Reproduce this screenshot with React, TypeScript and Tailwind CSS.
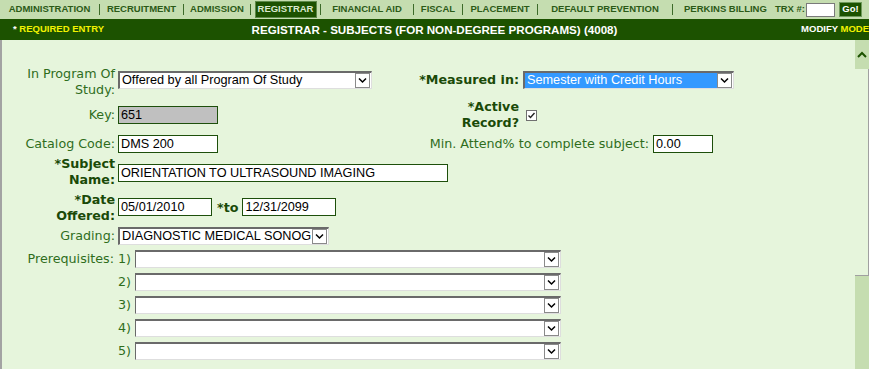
import React from "react";

const lbl = "font-['DejaVu_Sans',Verdana,sans-serif] text-[12.7px] leading-4 text-[#2f6d1c] text-right";
const req = "font-['DejaVu_Sans',Verdana,sans-serif] text-[12.7px] leading-4 font-bold text-[#1a4a08] text-right";
const field = "font-['Liberation_Sans',Arial,sans-serif] text-[12.7px] text-black";

function Arrow() {
  return (
    <div className="w-[15px] h-[15px] bg-white border border-[#8a8a8a] flex items-center justify-center shrink-0">
      <svg width="11" height="11" viewBox="0 0 11 11">
        <path d="M2 3.5 L5.5 7 L9 3.5" fill="none" stroke="#000" strokeWidth="1.5" />
      </svg>
    </div>
  );
}

function Select({ value = "", width, highlight = false, thin = false, className = "" }: { value?: string; width: string; highlight?: boolean; thin?: boolean; className?: string }) {
  return (
    <div
      className={`${width} h-[18px] flex items-center bg-white border-t-2 ${thin ? "border-l" : "border-l-2"} border-b border-r border-t-[#6a6a6a] border-l-[#6a6a6a] border-b-[#dedede] border-r-[#dedede] pr-[1px] ${className}`}
    >
      <div className={`flex-1 h-full overflow-hidden whitespace-nowrap pl-[2px] leading-[15px] ${field} ${highlight ? "bg-[#3399ff] text-white" : ""}`}>
        {value}
      </div>
      <Arrow />
    </div>
  );
}

function Input({ value = "", width, gray = false, className = "" }: { value?: string; width: string; gray?: boolean; className?: string }) {
  return (
    <div
      className={`${width} h-[18px] border border-[#1d4f0b] ${gray ? "bg-[#c0c0c0]" : "bg-white"} pl-[2px] leading-4 whitespace-nowrap overflow-hidden ${field} ${className}`}
    >
      {value}
    </div>
  );
}

const navItems = [
  { label: "ADMINISTRATION", w: "w-[99px]" },
  { label: "RECRUITMENT", w: "w-[83px]" },
  { label: "ADMISSION", w: "w-[66px]" },
  { label: "REGISTRAR", w: "w-[69px]", active: true },
  { label: "FINANCIAL AID", w: "w-[92px]" },
  { label: "FISCAL", w: "w-[48px]" },
  { label: "PLACEMENT", w: "w-[74px]" },
  { label: "DEFAULT PREVENTION", w: "w-[134px]" },
];

export default function App() {
  const nav = "font-['Liberation_Sans',Arial,sans-serif] text-[9.5px] font-bold";
  return (
    <div className="w-[869px] h-[369px] overflow-hidden bg-[#e6f5dc] flex flex-col">
      {/* top menu */}
      <div className={`h-[19px] bg-[#c5ddb0] flex items-center text-[#2b5a17] ${nav}`}>
        {navItems.map((it) => (
          <React.Fragment key={it.label}>
            <div className={`${it.w} h-full flex items-center justify-center`}>
              {it.active ? (
                <div className="w-[62px] h-[17px] bg-[#1c5200] border border-[#5e8a4a] text-[#dbe9cf] flex items-center justify-center">
                  {it.label}
                </div>
              ) : (
                it.label
              )}
            </div>
            <div className="w-px h-[11px] bg-[#3d6b2a]" />
          </React.Fragment>
        ))}
        <span className="ml-[11px]">PERKINS BILLING</span>
        <span className="ml-[8px]">TRX #:</span>
        <div className="ml-[1px] w-[29px] h-[14px] bg-white border border-[#7a7a7a]" />
        <div className="ml-[4px] w-[23px] h-[15px] bg-[#1c5200] border border-[#6f9a5c] text-white flex items-center justify-center">
          Go!
        </div>
      </div>

      {/* title bar */}
      <div className={`h-[21px] bg-[#1c5200] grid grid-cols-[1fr_auto_1fr] items-center ${nav}`}>
        <div className="pl-[13px] text-[#f2f200]">
          <span className="text-white">*</span> REQUIRED ENTRY
        </div>
        <div className="text-white text-[11.6px]">REGISTRAR - SUBJECTS (FOR NON-DEGREE PROGRAMS) (4008)</div>
        <div className="text-right whitespace-nowrap">
          <span className="text-white">MODIFY</span> <span className="text-[#f2f200]">MODE</span>
        </div>
      </div>

      <div className="flex flex-1 min-h-0">
        {/* form */}
        <div className="flex-1 border-l-2 border-[#a3a3a3] pt-[26px]">
          <div className="flex h-[32px]">
            <div className={`w-[113px] ${lbl}`}>In Program Of<br />Study:</div>
            <Select className="ml-[3px] mt-[5px]" width="w-[254px]" value="Offered by all Program Of Study" />
            <div className={`w-[147px] mt-[6px] ${req}`}>*Measured in:</div>
            <Select className="ml-[4px] mt-[5px]" width="w-[211px]" value="Semester with Credit Hours" highlight />
          </div>

          <div className="flex h-[32px] mt-[1px]">
            <div className={`w-[113px] mt-[8px] ${lbl}`}>Key:</div>
            <Input className="ml-[3px] mt-[7px]" width="w-[100px]" value="651" gray />
            <div className={`w-[301px] ${req}`}>*Active<br />Record?</div>
            <div className="ml-[7px] mt-[11px] w-[11px] h-[11px] bg-white border border-[#707070] flex items-center justify-center">
              <svg width="9" height="9" viewBox="0 0 9 9">
                <path d="M1.5 4.5 L3.5 6.5 L7.5 2" fill="none" stroke="#222" strokeWidth="1.4" />
              </svg>
            </div>
          </div>

          <div className="flex h-[23px] mt-[2px]">
            <div className={`w-[113px] mt-[3px] ${lbl}`}>Catalog Code:</div>
            <Input className="ml-[3px] mt-[2px]" width="w-[100px]" value="DMS 200" />
            <div className={`w-[431px] mt-[3px] ${lbl}`}>Min. Attend% to complete subject:</div>
            <Input className="ml-[4px] mt-[2px]" width="w-[60px]" value="0.00" />
          </div>

          <div className="flex h-[32px]">
            <div className={`w-[113px] ${req}`}>*Subject<br />Name:</div>
            <Input className="ml-[3px] mt-[8px]" width="w-[330px]" value="ORIENTATION TO ULTRASOUND IMAGING" />
          </div>

          <div className="flex h-[32px] mt-[4px]">
            <div className={`w-[113px] ${req}`}>*Date<br />Offered:</div>
            <Input className="ml-[3px] mt-[6px]" width="w-[94px]" value="05/01/2010" />
            <div className={`ml-[5px] mt-[8px] ${req}`}>*to</div>
            <Input className="ml-[4px] mt-[6px]" width="w-[94px]" value="12/31/2099" />
          </div>

          <div className="flex h-[18px] mt-[3px]">
            <div className={`w-[113px] mt-[1px] ${lbl}`}>Grading:</div>
            <Select className="ml-[3px]" width="w-[211px]" value="DIAGNOSTIC MEDICAL SONOG" />
          </div>

          <div className="flex flex-col gap-[5px] mt-[5px]">
            {["1)", "2)", "3)", "4)", "5)"].map((n, i) => (
              <div key={n} className="flex h-[18px]">
                <div className={`w-[129px] mt-[1px] whitespace-nowrap ${lbl}`}>
                  {i === 0 ? "Prerequisites: " : ""}
                  {n}
                </div>
                <Select className="ml-[4px]" width="w-[426px]" thin />
              </div>
            ))}
          </div>
        </div>

        {/* scrollbar */}
        <div className="w-[14px] flex flex-col bg-[#c5ddb0]">
          <div className="h-[29px] flex items-center justify-center">
            <svg width="10" height="7" viewBox="0 0 10 7">
              <path d="M1 6 L5 2 L9 6" fill="none" stroke="#1c5200" strokeWidth="2" />
            </svg>
          </div>
          <div className="h-[207px] bg-[#e6f5dc] border-r border-b border-[#a0a0a0]" />
        </div>
      </div>
    </div>
  );
}
